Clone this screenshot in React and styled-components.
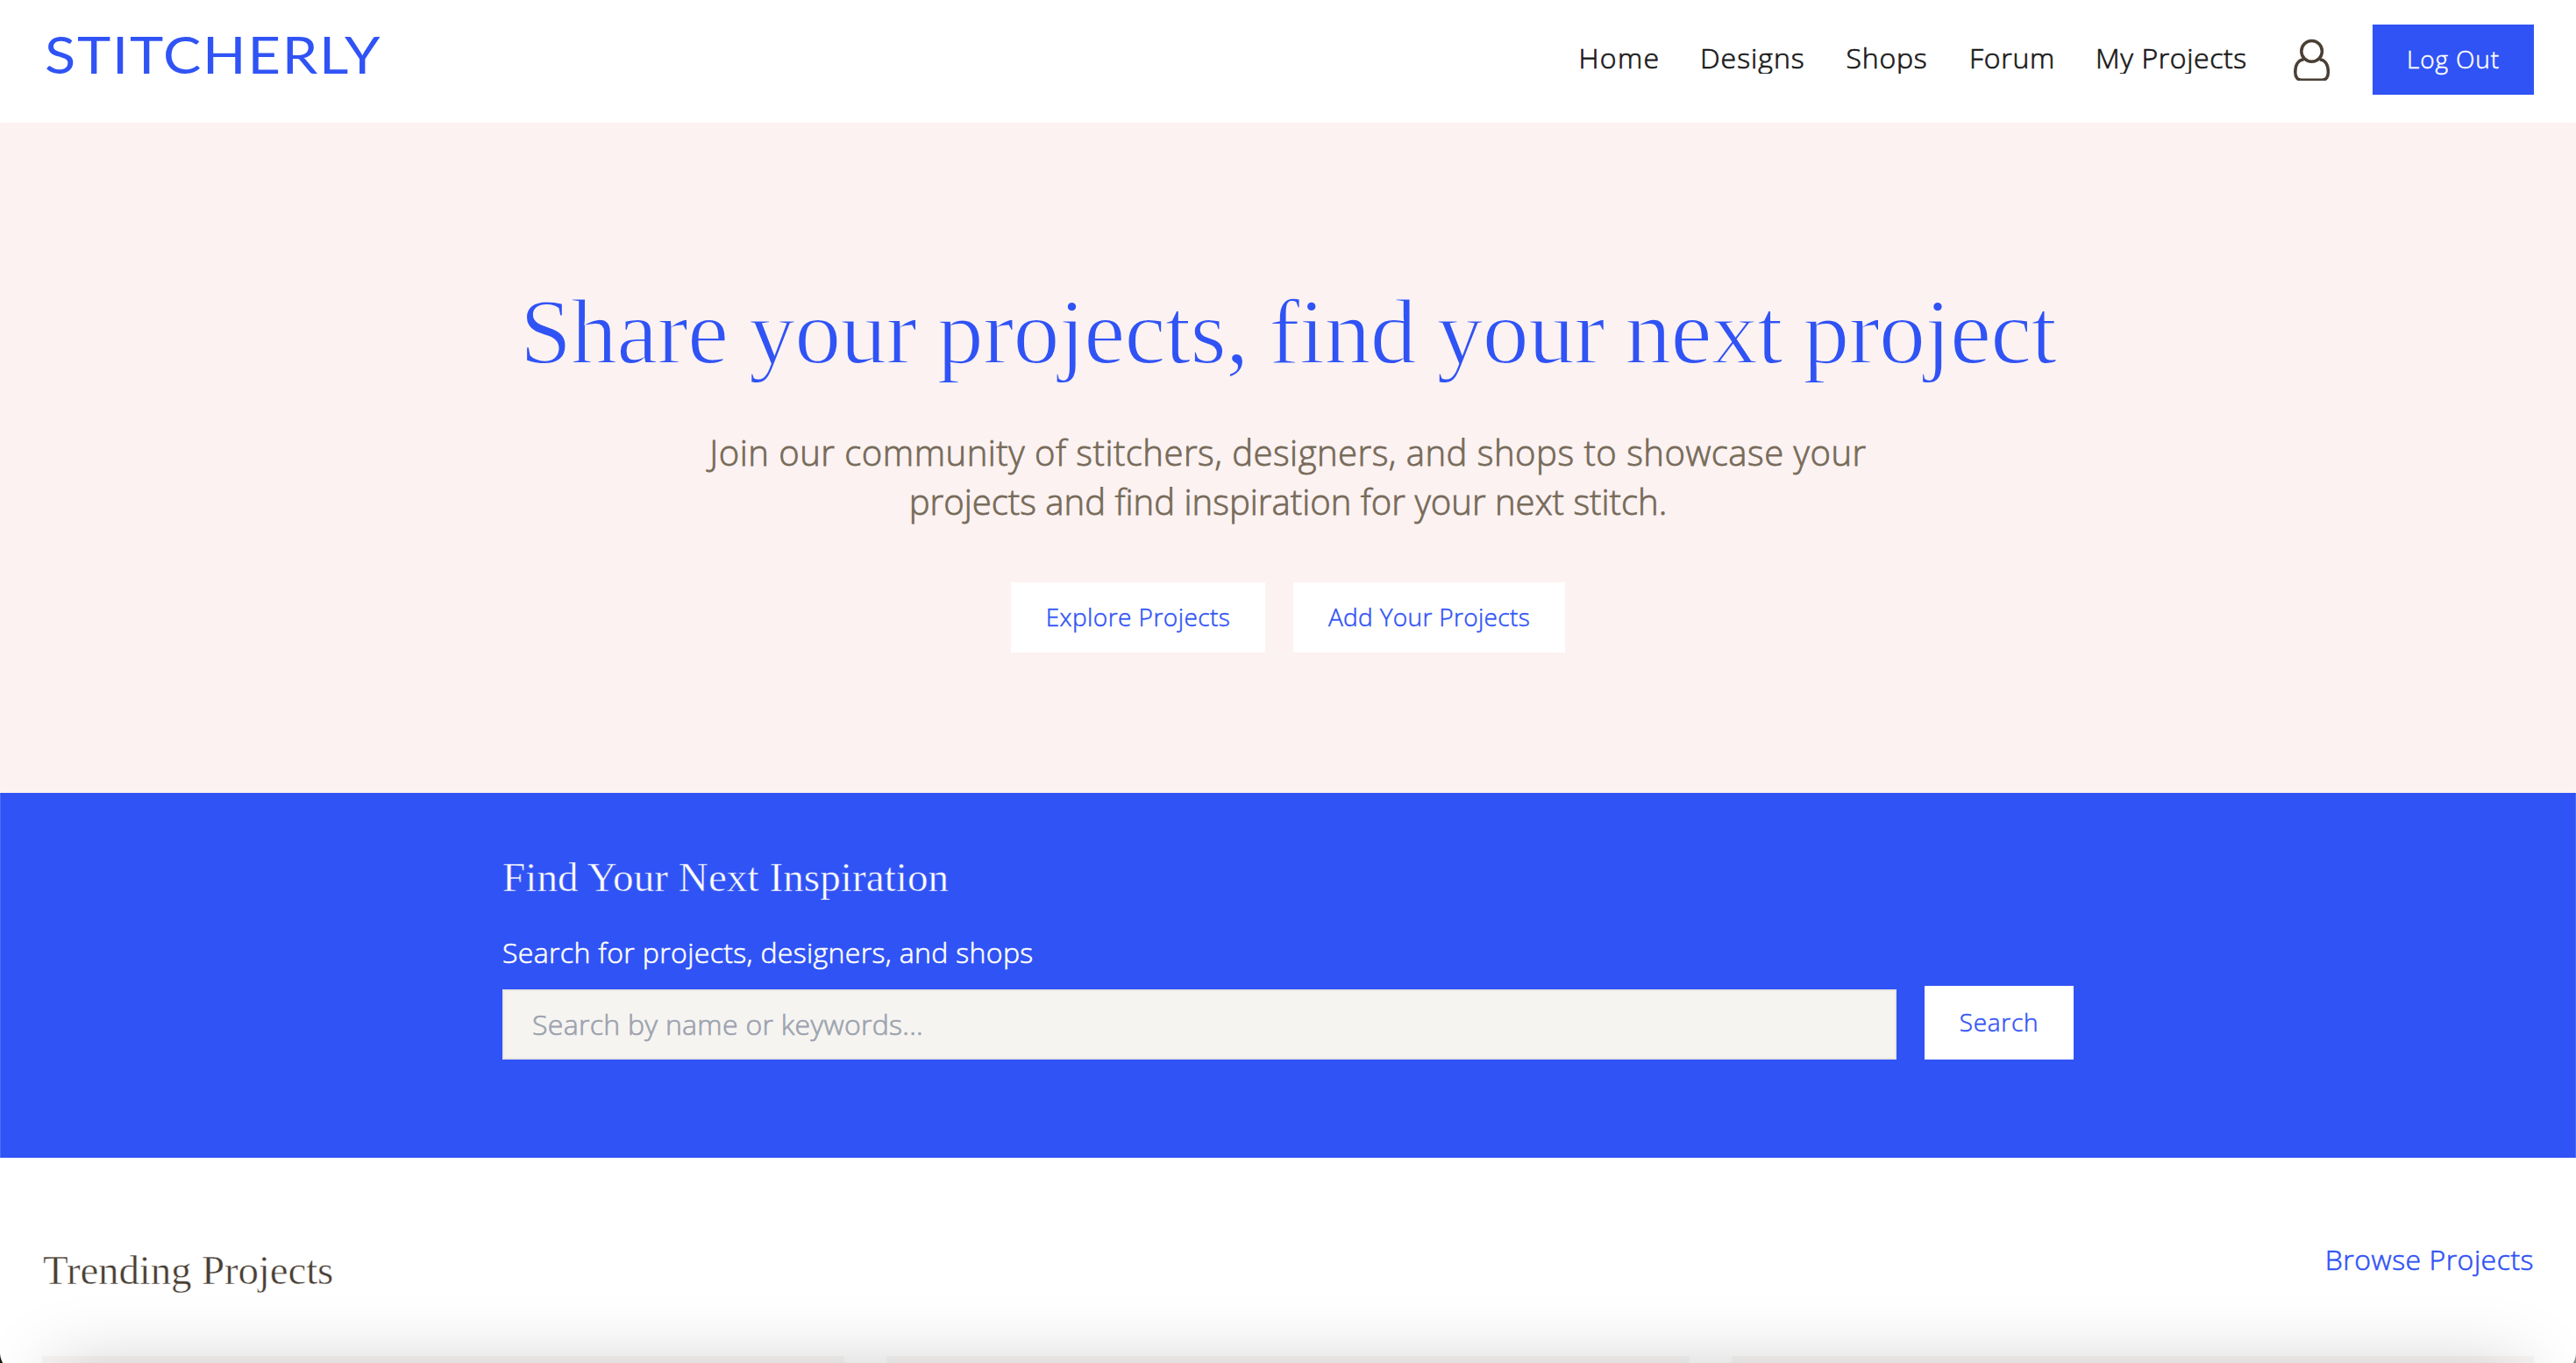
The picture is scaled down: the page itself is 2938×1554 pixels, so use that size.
import { styled, createGlobalStyle } from "styled-components";

const blue = "#3053f5";
const brown = "#4a3f35";

const GlobalStyle = createGlobalStyle`
  * {
    box-sizing: border-box;
  }
  body {
    margin: 0;
    background: #fff;
    font-family: "Open Sans", "Noto Sans", sans-serif;
    font-weight: 300;
  }
  h1, h2, p {
    margin: 0;
  }
`;

const Page = styled.div`
  position: relative;
  height: 1554px;
  overflow: hidden;
  background: #fff;
`;

const Header = styled.header`
  display: flex;
  justify-content: space-between;
  align-items: flex-start;
  height: 140px;
  padding: 0 48px 0 51px;
`;

const Logo = styled.a`
  display: block;
  margin-top: 20px;
  font-family: Lato, sans-serif;
  font-size: 59px;
  font-weight: 400;
  line-height: 84px;
  letter-spacing: 1.6px;
  color: ${blue};
  transform: scaleX(1.1);
  transform-origin: left center;
`;

const Nav = styled.nav`
  display: flex;
  align-items: center;
  gap: 48px;
  height: 80px;
  margin-top: 28px;
`;

const NavLink = styled.a`
  width: ${(p) => p.$width}px;
  height: 32px;
  padding-left: 1px;
  line-height: 28px;
  clip-path: inset(-12px -6px 0);
  white-space: nowrap;
  font-size: 32px;
  letter-spacing: ${(p) => p.$track}px;
  color: #1a1a1a;
  -webkit-text-stroke: 0.7px #1a1a1a;
`;

const IconLink = styled.a`
  width: 46px;
  height: 52px;
  svg {
    display: block;
  }
`;

const Button = styled.button`
  display: flex;
  align-items: center;
  justify-content: center;
  width: ${(p) => p.$width}px;
  height: ${(p) => p.$height || 80}px;
  padding: 0 0 3px;
  border: 0;
  font-family: inherit;
  font-size: 28px;
  font-weight: 300;
  white-space: nowrap;
  letter-spacing: ${(p) => p.$track}px;
  background: ${(p) => (p.$primary ? blue : "#fff")};
  color: ${(p) => (p.$primary ? "#fff" : blue)};
  -webkit-text-stroke: 0.5px ${(p) => (p.$primary ? "#fff" : blue)};
`;

const Hero = styled.section`
  display: flex;
  flex-direction: column;
  align-items: center;
  height: 764px;
  padding-top: 183px;
  background: #fcf2f1;
`;

const HeroTitle = styled.h1`
  font-family: "Liberation Serif", serif;
  font-size: 106px;
  font-weight: 400;
  line-height: 112px;
  letter-spacing: -0.8px;
  word-spacing: -2px;
  white-space: nowrap;
  color: ${blue};
  /* thins the stems */
  -webkit-text-stroke: 1.8px #fcf2f1;
`;

const HeroText = styled.p`
  margin-top: 53px;
  font-size: 40px;
  line-height: 56px;
  text-align: center;
  color: #776b5a;
  -webkit-text-stroke: 0.8px #776b5a;
`;

const Line = styled.span`
  display: block;
  white-space: nowrap;
  letter-spacing: ${(p) => p.$track}px;
`;

const HeroButtons = styled.div`
  display: flex;
  gap: 32px;
  margin-top: 64px;
`;

const SearchSection = styled.section`
  height: 416px;
  padding-top: 68px;
  background: ${blue};
`;

const SearchInner = styled.div`
  width: 1792px;
  margin: 0 auto;
  color: #fff;
`;

const SectionTitle = styled.h2`
  font-family: "Liberation Serif", serif;
  font-size: 47px;
  font-weight: 400;
  line-height: 56px;
  letter-spacing: ${(p) => p.$track}px;
  color: ${(p) => p.$color};
  -webkit-text-stroke: 0.5px ${(p) => p.$back};
`;

const Label = styled.label`
  display: block;
  margin-top: 34px;
  font-size: 32px;
  line-height: 48px;
  letter-spacing: 0.35px;
  -webkit-text-stroke: 0.6px #fff;
`;

const SearchRow = styled.div`
  display: flex;
  align-items: flex-end;
  gap: 32px;
  margin-top: 14px;
`;

const SearchInput = styled.input`
  flex: 1;
  height: 80px;
  padding: 0 32px 2px;
  border: 2px solid #e8e6e3;
  border-radius: 0;
  background: #f6f4f1;
  font-family: inherit;
  font-size: 32px;
  font-weight: 300;
  letter-spacing: 0.3px;
  &::placeholder {
    color: #9ca3af;
    -webkit-text-stroke: 0.7px #9ca3af;
  }
`;

const Trending = styled.section`
  padding: 92px 48px 0;
`;

const TrendingHeader = styled.div`
  display: flex;
  justify-content: space-between;
  height: 134px;
  ${SectionTitle} {
    padding: 8px 0 0 1px;
  }
`;

const BrowseLink = styled.a`
  font-size: 32px;
  line-height: 48px;
  letter-spacing: 0.5px;
  color: ${blue};
  -webkit-text-stroke: 0.6px ${blue};
`;

const Cards = styled.div`
  display: grid;
  grid-template-columns: repeat(3, 1fr);
  gap: 48px;
`;

const Card = styled.div`
  height: 400px;
  background: #f9f8f6;
`;

const BottomShadow = styled.div`
  position: absolute;
  top: 1562px;
  left: 60px;
  right: 60px;
  height: 200px;
  box-shadow: 0 0 86px rgba(0, 0, 0, 0.22);
`;

const Edge = styled.div`
  position: absolute;
  inset: 0;
  border: solid rgba(255, 255, 255, 0.15);
  border-width: 0 1px;
`;

const Corner = styled.div`
  position: absolute;
  bottom: 0;
  ${(p) => p.$side}: 0;
  width: 5px;
  height: 12px;
  background: radial-gradient(
    circle at ${(p) => (p.$side === "left" ? "24px" : "-19px")} 0,
    transparent 23.5px,
    ${(p) => p.$color} 24.5px
  );
`;

const links = [
  { name: "Home", width: 90.5, track: 1.3 },
  { name: "Designs", width: 118.5, track: 1.0 },
  { name: "Shops", width: 92.5, track: 0.8 },
  { name: "Forum", width: 96, track: 0.7 },
  { name: "My Projects", width: 175, track: 0.6 },
];

const UserIcon = () => (
  <svg width="46" height="50" viewBox="0 0 46 50" fill="none" stroke={brown} strokeWidth="3.5">
    <circle cx="24.6" cy="16.4" r="11.8" />
    <path d="M15.6 25.7C9 26.3 5.8 32.5 5.8 40.2C5.8 45.8 8.4 49.2 13 49.2H36.2C40.8 49.2 43.4 45.8 43.4 40.2C43.4 32.5 40.2 26.3 33.6 25.7" />
  </svg>
);

export default function App() {
  return (
    <Page>
      <GlobalStyle />
      <Header>
        <Logo>STITCHERLY</Logo>
        <Nav>
          {links.map((link) => (
            <NavLink key={link.name} $width={link.width} $track={link.track}>
              {link.name}
            </NavLink>
          ))}
          <IconLink>
            <UserIcon />
          </IconLink>
          <Button $primary $width={184} $track={0.85}>
            Log Out
          </Button>
        </Nav>
      </Header>

      <Hero>
        <HeroTitle>Share your projects, find your next project</HeroTitle>
        <HeroText>
          <Line $track={0.51}>
            Join our community of stitchers, designers, and shops to showcase your
          </Line>
          <Line $track={0.04}>projects and find inspiration for your next stitch.</Line>
        </HeroText>
        <HeroButtons>
          <Button $width={290} $track={0.45}>
            Explore Projects
          </Button>
          <Button $width={310} $track={0.33}>
            Add Your Projects
          </Button>
        </HeroButtons>
      </Hero>

      <SearchSection>
        <SearchInner>
          <SectionTitle $color="#fff" $back={blue} $track={0.1}>
            Find Your Next Inspiration
          </SectionTitle>
          <Label htmlFor="search">Search for projects, designers, and shops</Label>
          <SearchRow>
            <SearchInput id="search" placeholder="Search by name or keywords..." />
            <Button $width={170} $height={84} $track={0.7}>
              Search
            </Button>
          </SearchRow>
        </SearchInner>
      </SearchSection>

      <Trending>
        <TrendingHeader>
          <SectionTitle $color={brown} $back="#fff" $track={-0.15}>
            Trending Projects
          </SectionTitle>
          <BrowseLink>Browse Projects</BrowseLink>
        </TrendingHeader>
        <Cards>
          <Card />
          <Card />
          <Card />
        </Cards>
      </Trending>

      <BottomShadow />
      <Edge />
      <Corner $side="left" $color="#0f1a08" />
      <Corner $side="right" $color="#8a8a8a" />
    </Page>
  );
}
